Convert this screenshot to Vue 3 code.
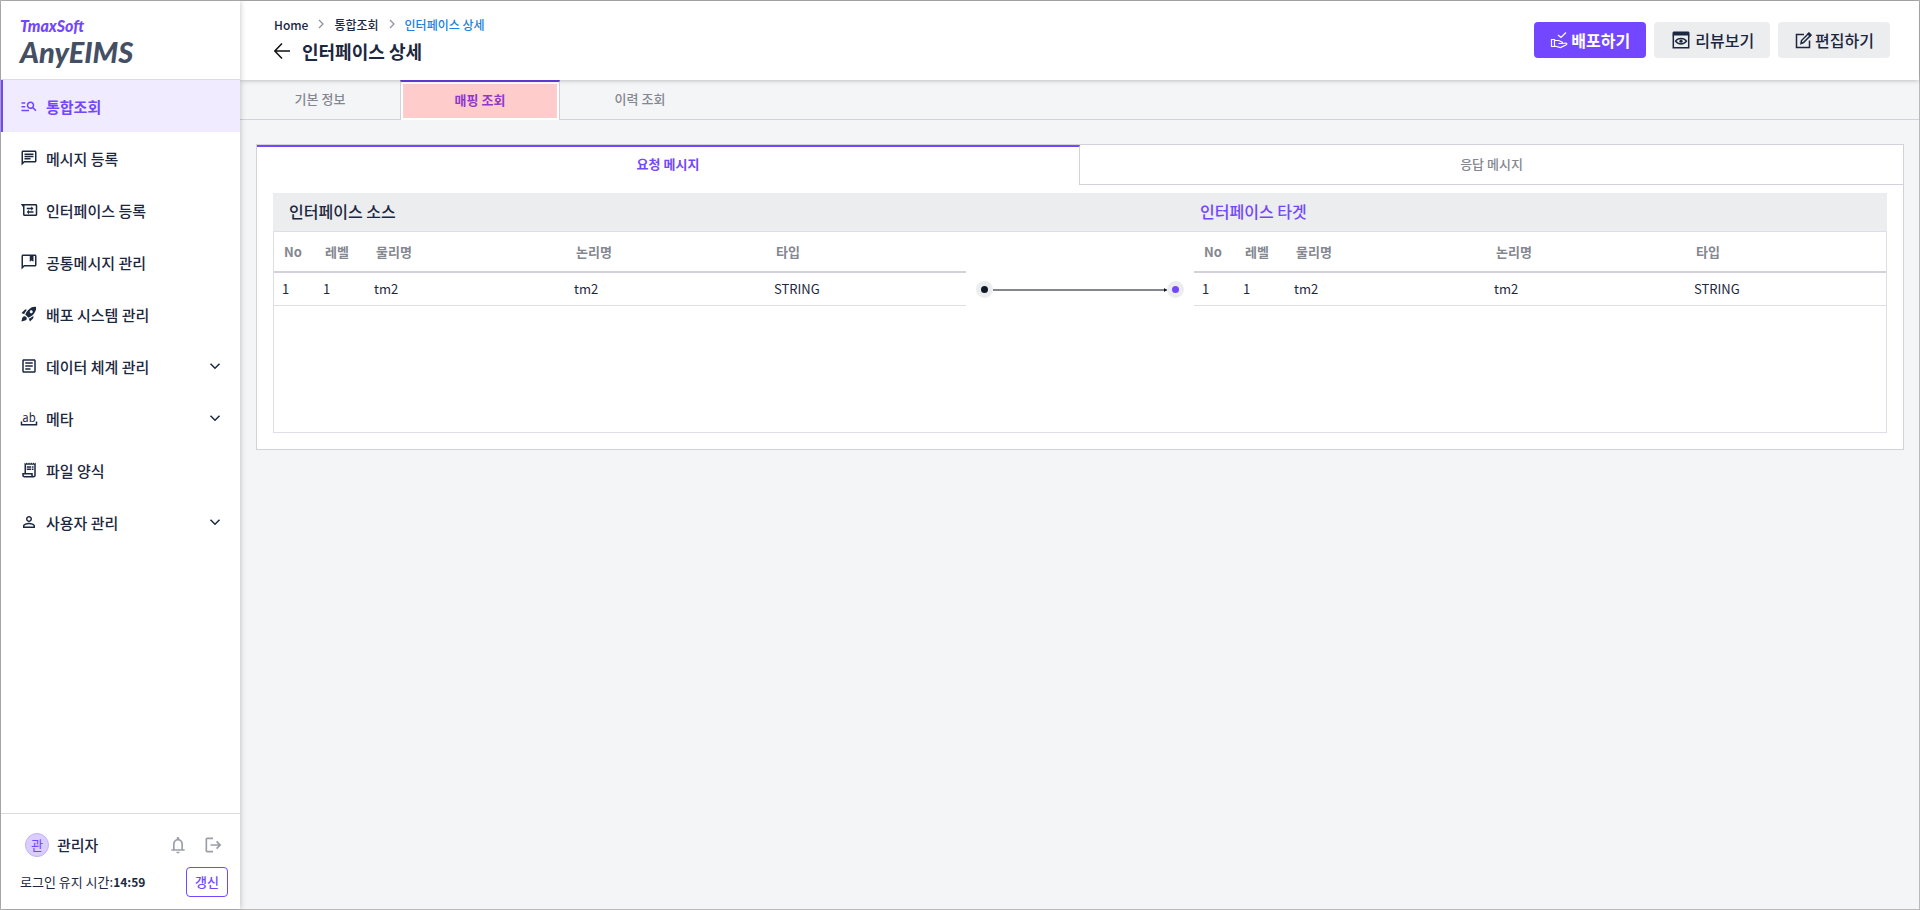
<script setup>
import { ref } from 'vue'

const menu = [
  { label: '통합조회', icon: 'search', active: true },
  { label: '메시지 등록', icon: 'message' },
  { label: '인터페이스 등록', icon: 'interface' },
  { label: '공통메시지 관리', icon: 'bookmark' },
  { label: '배포 시스템 관리', icon: 'rocket' },
  { label: '데이터 체계 관리', icon: 'article', expandable: true },
  { label: '메타', icon: 'meta', expandable: true },
  { label: '파일 양식', icon: 'receipt' },
  { label: '사용자 관리', icon: 'person', expandable: true }
]

const iconPaths = {
  search: 'M7 9H2V7h5v2zm0 3H2v2h5v-2zm13.59 7-3.83-3.83c-.8.52-1.74.83-2.76.83-2.76 0-5-2.24-5-5s2.24-5 5-5 5 2.24 5 5c0 1.02-.31 1.96-.83 2.75L22 17.59 20.59 19zM17 11c0-1.65-1.35-3-3-3s-3 1.35-3 3 1.35 3 3 3 3-1.35 3-3zM2 19h10v-2H2v2z',
  message: 'M4 4h16v12H5.17L4 17.17V4m0-2c-1.1 0-1.99.9-1.99 2L2 22l4-4h14c1.1 0 2-.9 2-2V4c0-1.1-.9-2-2-2H4zm2 10h8v2H6v-2zm0-3h12v2H6V9zm0-3h12v2H6V6z',
  interface: 'M1 4h20c1.1 0 2 .9 2 2v12c0 1.1-.9 2-2 2H6c-1.1 0-2-.9-2-2V8L1 4zm5 2v12h15V6H6zM15 7l3 3-3 3v-2H9V9h6zM12 11.5l-3 3 3 3v-2h6v-2h-6z',
  bookmark: 'M4 4h16v12H5.17L4 17.17V4m0-2c-1.1 0-1.99.9-1.99 2L2 22l4-4h14c1.1 0 2-.9 2-2V4c0-1.1-.9-2-2-2H4zm9 2h5v7.5L15.500 10 13 11.500V4z',
  rocket: 'M9.19 6.35c-2.04 2.29-3.44 5.58-3.57 5.89L2 10.69l4.05-4.05c.47-.47 1.15-.68 1.81-.55l1.33.26zM11.17 17s3.74-1.55 5.89-3.7c5.4-5.4 4.5-9.62 4.21-10.57-.95-.3-5.17-1.19-10.57 4.21C8.55 9.09 7 12.83 7 12.83L11.17 17zm6.48-2.19c-2.29 2.04-5.58 3.44-5.89 3.57L13.31 22l4.05-4.05c.47-.47.68-1.15.55-1.81l-.26-1.33zM9 18c0 .83-.34 1.58-.88 2.12C6.94 21.3 2 22 2 22s.7-4.94 1.88-6.12C4.42 15.34 5.17 15 6 15c1.66 0 3 1.34 3 3zm4-9c0-1.1.9-2 2-2s2 .9 2 2-.9 2-2 2-2-.9-2-2z',
  article: 'M19 5v14H5V5h14m0-2H5c-1.1 0-2 .9-2 2v14c0 1.1.9 2 2 2h14c1.1 0 2-.9 2-2V5c0-1.1-.9-2-2-2zM14 17H7v-2h7v2zm3-4H7v-2h10v2zm0-4H7V7h10v2z',
  meta: 'M1 16.500h2V20h18v-3.500h2V22H1z',
  receipt: 'M19.5 3.5 18 2l-1.5 1.5L15 2l-1.5 1.5L12 2l-1.5 1.5L9 2 7.5 3.5 6 2v14H3v3c0 1.66 1.34 3 3 3h12c1.66 0 3-1.34 3-3V2l-1.5 1.5zM15 20H6c-.55 0-1-.45-1-1v-1h10v2zm4-1c0 .55-.45 1-1 1s-1-.45-1-1v-3H8V5h11v14zM9 7h6v2H9zm7 0h2v2h-2zM9 10h6v2H9zm7 0h2v2h-2z',
  person: 'M12 5.9c1.16 0 2.1.94 2.1 2.1s-.94 2.1-2.1 2.1S9.9 9.16 9.9 8s.94-2.1 2.1-2.1m0 9c2.97 0 6.1 1.46 6.1 2.1v1.1H5.9V17c0-.64 3.13-2.1 6.1-2.1M12 4C9.79 4 8 5.79 8 8s1.79 4 4 4 4-1.79 4-4-1.79-4-4-4zm0 9c-2.67 0-8 1.34-8 4v3h16v-3c0-2.66-5.33-4-8-4z'
}

const tabs = ['기본 정보', '매핑 조회', '이력 조회']
const activeTab = ref(1)
const messageTabs = ['요청 메시지', '응답 메시지']
const activeMessage = ref(0)

const columns = ['No', '레벨', '물리명', '논리명', '타입']
const sourceRows = [['1', '1', 'tm2', 'tm2', 'STRING']]
const targetRows = [['1', '1', 'tm2', 'tm2', 'STRING']]
</script>

<template>
  <div class="app">
    <aside class="sidebar">
      <div class="logo">
        <span class="brand">TmaxSoft</span>
        <span class="product">AnyEIMS</span>
      </div>
      <nav class="menu">
        <a v-for="item in menu" :key="item.label" href="#" class="menu-item" :class="{ active: item.active }">
          <svg class="menu-icon" viewBox="0 0 24 24" aria-hidden="true">
            <path :d="iconPaths[item.icon]" />
            <text v-if="item.icon === 'meta'" x="12" y="17" text-anchor="middle" class="meta-text">ab</text>
          </svg>
          <span class="menu-label">{{ item.label }}</span>
          <svg v-if="item.expandable" class="menu-chevron" viewBox="0 0 24 24" aria-hidden="true">
            <path d="M6 9l6 6 6-6" />
          </svg>
        </a>
      </nav>
      <div class="account">
        <div class="account-row">
          <span class="avatar">관</span>
          <span class="account-name">관리자</span>
          <button class="icon-button" aria-label="알림">
            <svg viewBox="0 0 24 24"><path d="M12 22c1.1 0 2-.9 2-2h-4c0 1.100.9 2 2 2zm6-5v-6c0-3.070-1.630-5.640-4.500-6.320V4c0-.83-.67-1.500-1.500-1.500s-1.500.67-1.500 1.500v.68C7.640 5.360 6 7.920 6 11v6H4v2h16v-2h-2zm-2 0H8v-6c0-2.480 1.510-4.500 4-4.500s4 2.020 4 4.500v6z" /></svg>
          </button>
          <button class="icon-button" aria-label="로그아웃">
            <svg viewBox="0 0 24 24"><path d="M12 19v2H5c-1.100 0-2-.9-2-2V5c0-1.100.9-2 2-2h7v2H5v14h7zM17 7l-1.400 1.400 2.600 2.600H9v2h9.200l-2.600 2.600L17 17l5-5-5-5z" /></svg>
          </button>
        </div>
        <div class="session-row">
          <span class="session">로그인 유지 시간:<b>14:59</b></span>
          <button class="renew">갱신</button>
        </div>
      </div>
    </aside>

    <div class="main">
      <header class="header">
        <div class="heading">
          <nav class="crumbs">
            <a href="#">Home</a>
            <svg viewBox="0 0 12 12" aria-hidden="true"><path d="M4 2l4 4-4 4" /></svg>
            <a href="#">통합조회</a>
            <svg viewBox="0 0 12 12" aria-hidden="true"><path d="M4 2l4 4-4 4" /></svg>
            <a href="#" class="current">인터페이스 상세</a>
          </nav>
          <div class="title-row">
            <button class="back" aria-label="뒤로">
              <svg viewBox="0 0 16 16"><path d="M16 8H1M8 0.500L0.800 8L8 15.500" /></svg>
            </button>
            <h1>인터페이스 상세</h1>
          </div>
        </div>
        <div class="actions">
          <button class="action primary">
            <svg class="small" viewBox="0 0 18 18" aria-hidden="true">
              <path d="M8 4l3 2.500L16 1.500M1.500 8.500h3v7h-3zM4.500 9.500h4l3.500 1.500c.8.5.5 1.500-.5 1.500H8.500M12 12.500l4-.5c1 .2 1 1.300.3 1.700L10.500 16.500l-6-1.500" />
            </svg>
            배포하기
          </button>
          <button class="action">
            <svg class="large" viewBox="0 0 22 22" aria-hidden="true">
              <path class="solid" d="M2.500 4c0-.8.7-1.500 1.500-1.500h14c.8 0 1.500.7 1.500 1.500v2.500h-17z" />
              <path d="M3.300 6v12.700h15.400V6M5.500 12.200c2.500-3.700 8.500-3.700 11 0-2.500 3.700-8.500 3.700-11 0z" />
              <circle class="solid" cx="11" cy="12.200" r="1.600" />
            </svg>
            리뷰보기
          </button>
          <button class="action">
            <svg class="small" viewBox="0 0 18 18" aria-hidden="true">
              <path d="M10 3.500H2.500v13h13V9.500M7 12.500l.5-3L14.500 2.500l2 2-7 7z" />
              <path class="solid" d="M13 3l2-2 3 3-2 2z" />
            </svg>
            편집하기
          </button>
        </div>
      </header>

      <div class="tabs" role="tablist">
        <button v-for="(tab, i) in tabs" :key="tab" role="tab" class="tab" :class="{ active: i === activeTab }"
          :aria-selected="i === activeTab" @click="activeTab = i">
          <span>{{ tab }}</span>
        </button>
      </div>

      <main class="card">
        <div class="message-tabs" role="tablist">
          <button v-for="(tab, i) in messageTabs" :key="tab" role="tab" class="message-tab"
            :class="{ active: i === activeMessage }" :aria-selected="i === activeMessage" @click="activeMessage = i">
            {{ tab }}
          </button>
        </div>
        <section class="mapping">
          <div class="mapping-head">
            <h2>인터페이스 소스</h2>
            <h2 class="target">인터페이스 타겟</h2>
          </div>
          <div class="mapping-body">
            <table>
              <thead>
                <tr><th v-for="column in columns" :key="column">{{ column }}</th></tr>
              </thead>
              <tbody>
                <tr v-for="(row, r) in sourceRows" :key="r">
                  <td v-for="(cell, c) in row" :key="c">{{ cell }}</td>
                </tr>
              </tbody>
            </table>
            <div class="links">
              <div v-for="(row, r) in sourceRows" :key="r" class="link">
                <span class="port"></span>
                <span class="wire"></span>
                <span class="port end"></span>
              </div>
            </div>
            <table>
              <thead>
                <tr><th v-for="column in columns" :key="column">{{ column }}</th></tr>
              </thead>
              <tbody>
                <tr v-for="(row, r) in targetRows" :key="r">
                  <td v-for="(cell, c) in row" :key="c">{{ cell }}</td>
                </tr>
              </tbody>
            </table>
          </div>
        </section>
      </main>
    </div>
  </div>
</template>

<style>
body {
  margin: 0;
}
</style>

<style scoped>
.app,
.app * {
  box-sizing: border-box;
}

.app {
  display: flex;
  min-height: 100vh;
  border: 1px solid #b9b9b9;
  background: #f4f5f7;
  color: #1c2740;
  font-family: "Noto Sans CJK KR", "Noto Sans", sans-serif;
  font-size: 13px;
}

button {
  padding: 0;
  border: 0;
  background: none;
  color: inherit;
  font-family: inherit;
  cursor: pointer;
}

a {
  color: inherit;
  text-decoration: none;
}

.sidebar {
  position: relative;
  z-index: 2;
  display: flex;
  flex: 0 0 239px;
  flex-direction: column;
  background: #fff;
  box-shadow: 0 0 6px rgba(0, 0, 0, 0.25);
}

.logo {
  display: flex;
  flex-direction: column;
  height: 79px;
  padding: 15px 19px 0;
  border-bottom: 1px solid #dcdce0;
  font-family: Lato, "Open Sans", sans-serif;
  font-style: italic;
  font-weight: 900;
}

.brand {
  color: #7347ff;
  font-size: 16px;
  line-height: 20px;
}

.product {
  color: #454f63;
  font-size: 29px;
  line-height: 32px;
}

.menu {
  flex: 1;
}

.menu-item {
  display: flex;
  align-items: center;
  gap: 8px;
  height: 52px;
  padding: 0 16px 0 17px;
  border-left: 2px solid transparent;
  font-size: 15px;
  font-weight: 500;
}

.menu-item.active {
  border-left-color: #7347ff;
  background: #f0ebff;
  color: #7347ff;
  font-weight: 700;
}

.menu-icon {
  width: 18px;
  height: 18px;
  overflow: visible;
  fill: currentColor;
  fill-rule: evenodd;
}

.meta-text {
  font-size: 15px;
  font-weight: 400;
}

.menu-label {
  flex: 1;
}

.menu-chevron {
  width: 18px;
  height: 18px;
  fill: none;
  stroke: currentColor;
  stroke-width: 2;
}

.account {
  padding: 18px 12px 12px 19px;
  border-top: 1px solid #dcdce0;
}

.account-row {
  display: flex;
  align-items: center;
  height: 26px;
  padding-left: 5px;
}

.avatar {
  width: 24px;
  height: 24px;
  border: 1px solid #c3b0f5;
  border-radius: 50%;
  background: #dacdff;
  color: #7347ff;
  font-size: 13px;
  line-height: 21px;
  text-align: center;
}

.account-name {
  flex: 1;
  margin-left: 8px;
  padding-bottom: 2px;
  font-size: 15px;
  font-weight: 500;
}

.icon-button {
  width: 20px;
  height: 20px;
  margin-right: 5px;
  color: #9a9ea6;
}

.icon-button + .icon-button {
  margin-left: 10px;
}

.icon-button svg {
  display: block;
  fill: currentColor;
}

.session-row {
  display: flex;
  align-items: center;
  justify-content: space-between;
  height: 30px;
  margin-top: 9px;
}

.session {
  padding-bottom: 2px;
  font-size: 13px;
}

.session b {
  font-size: 12px;
}

.renew {
  width: 42px;
  height: 30px;
  padding-bottom: 2px;
  border: 1px solid #7347ff;
  border-radius: 4px;
  color: #7347ff;
  font-size: 13px;
  font-weight: 500;
}

.main {
  display: flex;
  flex: 1;
  flex-direction: column;
  min-width: 0;
}

.header {
  position: relative;
  z-index: 1;
  display: flex;
  justify-content: space-between;
  height: 79px;
  padding: 0 29px 0 34px;
  background: #fff;
  box-shadow: 0 0 5px rgba(0, 0, 0, 0.3);
}

.heading {
  padding-top: 14px;
}

.crumbs {
  display: flex;
  align-items: center;
  gap: 7px;
  height: 18px;
  font-size: 12px;
  font-weight: 500;
}

.crumbs svg {
  width: 12px;
  height: 12px;
  fill: none;
  stroke: #8b909b;
  stroke-width: 1.2;
}

.crumbs .current {
  color: #1681e0;
}

.title-row {
  display: flex;
  align-items: center;
  gap: 12px;
  height: 36px;
}

.back svg {
  display: block;
  width: 16px;
  height: 16px;
  fill: none;
  stroke: #111;
  stroke-width: 1.5;
}

h1 {
  margin: 0;
  font-size: 18px;
  font-weight: 700;
  line-height: 28px;
}

.actions {
  display: flex;
  gap: 8px;
  padding-top: 21px;
}

.action {
  display: flex;
  align-items: center;
  gap: 3px;
  height: 36px;
  padding: 0 16px 1px;
  border-radius: 4px;
  background: #ecedef;
  font-size: 16px;
  font-weight: 500;
}

.action.primary {
  background: #7347ff;
  color: #fff;
  font-weight: 700;
}

.action svg {
  fill: none;
  stroke: currentColor;
  stroke-width: 1.5;
}

.action.primary svg {
  stroke-width: 1.2;
}

.action .small {
  width: 18px;
  height: 18px;
}

.action .large {
  width: 22px;
  height: 22px;
}

.action .solid {
  fill: currentColor;
  stroke: none;
}

.tabs {
  display: flex;
  height: 40px;
  border-bottom: 1px solid #d2d3d8;
}

.tab {
  width: 160px;
  height: 40px;
  color: #84878f;
  font-size: 13px;
  font-weight: 500;
}

.tab span {
  display: block;
  height: 34px;
  line-height: 32px;
}

.tab.active {
  padding: 2px;
  border: solid #d2d3d8;
  border-width: 2px 1px 0;
  border-top-color: #6b3feb;
  background: #fff;
  color: #8f39cc;
  font-weight: 700;
}

.tab.active span {
  background: #fcc;
}

.card {
  margin: 24px 15px 0 16px;
  padding-bottom: 16px;
  border: 1px solid #d2d3d8;
  background: #fff;
}

.message-tabs {
  display: grid;
  grid-template-columns: 1fr 1fr;
}

.message-tab {
  height: 40px;
  padding-bottom: 2px;
  border-bottom: 1px solid #d2d3d8;
  color: #84878f;
  font-size: 13px;
  font-weight: 500;
}

.message-tab.active {
  padding-bottom: 5px;
  border-top: 2px solid #7347ff;
  border-right: 1px solid #d2d3d8;
  border-bottom: 0;
  color: #7347ff;
  font-weight: 700;
}

.mapping {
  margin: 8px 16px 0;
}

.mapping-head {
  display: grid;
  grid-template-columns: 1fr 228px 1fr;
  align-items: center;
  height: 38px;
  padding-bottom: 2px;
  background: #ecedef;
}

h2 {
  margin: 0;
  padding-left: 16px;
  font-size: 16px;
  font-weight: 500;
}

h2.target {
  grid-column: 3;
  padding-left: 6px;
  color: #7347ff;
}

.mapping-body {
  display: grid;
  grid-template-columns: 1fr 228px 1fr;
  align-items: start;
  min-height: 202px;
  border: 1px solid #dedfe4;
}

table {
  width: 100%;
  border-collapse: separate;
  border-spacing: 0;
  table-layout: fixed;
}

th,
td {
  font-size: 13px;
  line-height: 18px;
  text-align: left;
}

th {
  height: 41px;
  padding: 0 10px;
  border-bottom: 2px solid #d2d3d8;
  color: #84878f;
  font-weight: 700;
}

th:nth-child(1) {
  width: 41px;
}

th:nth-child(2) {
  width: 51px;
}

td {
  height: 33px;
  padding: 0 8px;
  border-bottom: 1px solid #dedfe4;
}

.links {
  padding: 41px 10px 0;
}

.link {
  display: flex;
  align-items: center;
  height: 33px;
}

.port {
  width: 17px;
  height: 17px;
  border: 5px solid #ecedef;
  border-radius: 50%;
  background: #111827;
}

.port.end {
  background: #7347ff;
}

.wire {
  position: relative;
  flex: 1;
  height: 2px;
  background: #83868d;
}

.wire::after {
  content: "";
  position: absolute;
  top: -1px;
  right: 0;
  border: 2px solid transparent;
  border-right: 0;
  border-left: 3px solid #111827;
}
</style>
